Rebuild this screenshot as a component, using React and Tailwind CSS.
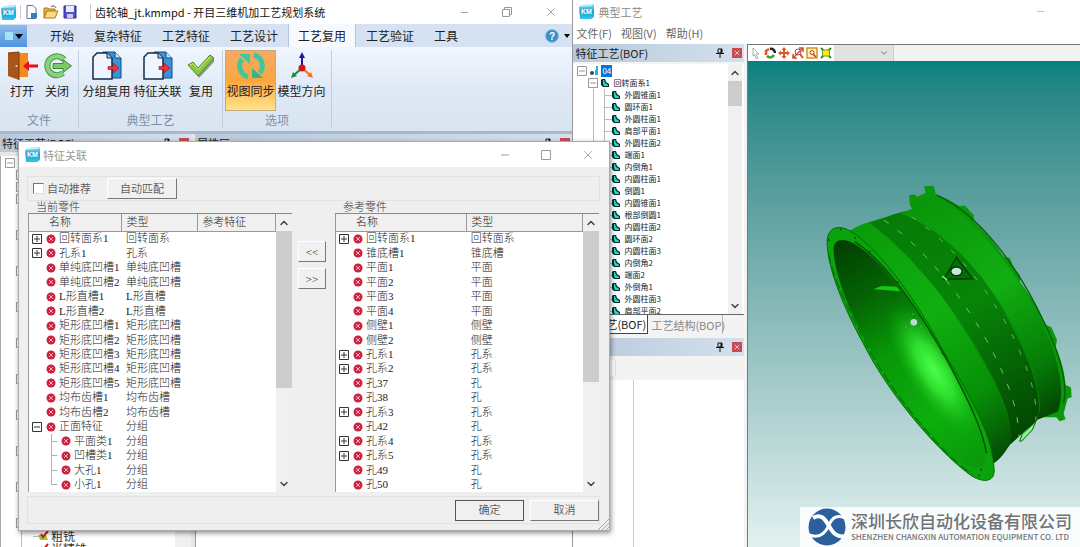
import { Minus, X, ChevronUp, ChevronDown } from 'lucide-react';

const currentParts = [
  { name: '回转面系1', type: '回转面系', toggle: 'plus' },
  { name: '孔系1', type: '孔系', toggle: 'plus' },
  { name: '单纯底凹槽1', type: '单纯底凹槽' },
  { name: '单纯底凹槽2', type: '单纯底凹槽' },
  { name: 'L形直槽1', type: 'L形直槽' },
  { name: 'L形直槽2', type: 'L形直槽' },
  { name: '矩形底凹槽1', type: '矩形底凹槽' },
  { name: '矩形底凹槽2', type: '矩形底凹槽' },
  { name: '矩形底凹槽3', type: '矩形底凹槽' },
  { name: '矩形底凹槽4', type: '矩形底凹槽' },
  { name: '矩形底凹槽5', type: '矩形底凹槽' },
  { name: '均布齿槽1', type: '均布齿槽' },
  { name: '均布齿槽2', type: '均布齿槽' },
  { name: '正面特征', type: '分组', toggle: 'minus' },
  { name: '平面类1', type: '分组', child: true },
  { name: '凹槽类1', type: '分组', child: true },
  { name: '大孔1', type: '分组', child: true },
  { name: '小孔1', type: '分组', child: true, last: true }
];

const referenceParts = [
  { name: '回转面系1', type: '回转面系', toggle: 'plus' },
  { name: '锥底槽1', type: '锥底槽' },
  { name: '平面1', type: '平面' },
  { name: '平面2', type: '平面' },
  { name: '平面3', type: '平面' },
  { name: '平面4', type: '平面' },
  { name: '侧壁1', type: '侧壁' },
  { name: '侧壁2', type: '侧壁' },
  { name: '孔系1', type: '孔系', toggle: 'plus' },
  { name: '孔系2', type: '孔系', toggle: 'plus' },
  { name: '孔37', type: '孔' },
  { name: '孔38', type: '孔' },
  { name: '孔系3', type: '孔系', toggle: 'plus' },
  { name: '孔42', type: '孔' },
  { name: '孔系4', type: '孔系', toggle: 'plus' },
  { name: '孔系5', type: '孔系', toggle: 'plus' },
  { name: '孔49', type: '孔' },
  { name: '孔50', type: '孔' }
];

const bofItems = [
  '外圆锥面1', '圆环面1', '外圆柱面1', '肩部平面1', '外圆柱面2', '端面1', '内倒角1',
  '内圆柱面1', '倒圆1', '内圆锥面1', '根部倒圆1', '内圆柱面2', '圆环面2', '内圆柱面3',
  '内倒角2', '端面2', '外倒角1', '外圆柱面3', '肩部平面2'
];

const tabs = ['开始', '复杂特征', '工艺特征', '工艺设计', '工艺复用', '工艺验证', '工具'];

const ribbonGroups = [
  {
    title: '文件',
    width: 'w-[79px] px-1',
    buttons: [
      { label: '打开', icon: DoorIcon, width: 'w-9' },
      { label: '关闭', icon: CloseFileIcon, width: 'w-[34px]' }
    ]
  },
  {
    title: '典型工艺',
    width: 'w-[144px] px-[2px]',
    buttons: [
      { label: '分组复用', icon: CopyPagesIcon, width: 'w-[51px]' },
      { label: '特征关联', icon: CopyPagesIcon, width: 'w-[51px]' },
      { label: '复用', icon: TickIcon, width: 'w-9' }
    ]
  },
  {
    title: '选项',
    width: 'w-[109px] px-[2px]',
    buttons: [
      { label: '视图同步', icon: SyncIcon, width: 'w-[51px]', active: true },
      { label: '模型方向', icon: AxesIcon, width: 'w-[51px]' }
    ]
  }
];

function KmLogo() {
  return (
    <svg viewBox="0 0 15 15" className="w-[15px] h-[15px] shrink-0">
      <defs>
        <linearGradient id="km" x1="0" y1="0" x2="0" y2="1">
          <stop offset="0" stopColor="#8fdcf2" />
          <stop offset=".5" stopColor="#1da0d0" />
          <stop offset="1" stopColor="#37c3ea" />
        </linearGradient>
      </defs>
      <path d="M0 3 3 1 15 0v13l-3 2H1z" fill="url(#km)" />
      <path d="M0 3 3 1 15 0l-2 2z" fill="#c3eef8" />
      <text x="7.5" y="9.5" textAnchor="middle" fontSize="7" fontWeight="700" fill="#fff" fontFamily="Liberation Sans">KM</text>
    </svg>
  );
}

function DoorIcon() {
  return (
    <svg viewBox="0 0 32 30" className="w-8 h-[30px]">
      <path d="M10 2h12v24H10z" fill="#f58a1c" />
      <path d="M2 2 13 1v28L2 25z" fill="#a9561a" />
      <path d="M2 2 13 1v28" fill="none" stroke="#7a3a0c" />
      <circle cx="10.500" cy="15" r="1" fill="#ffd58a" />
      <path d="m17 15 6-5v3.500h9v3h-9V20z" fill="#e6101c" />
    </svg>
  );
}

function CloseFileIcon() {
  return (
    <svg viewBox="0 0 30 30" className="w-[30px] h-[30px]">
      <path d="M22 8.500A9.500 9.500 0 1 0 21 22" fill="none" stroke="#3c9a3c" strokeWidth="6" />
      <path d="M22 8.500A9.500 9.500 0 1 0 21 22" fill="none" stroke="#8fd07e" strokeWidth="4" />
      <path d="M11 12.500h10V8.500l8.500 6.500-8.500 6.500v-4H11z" fill="#7cc96a" stroke="#2f8f36" />
    </svg>
  );
}

function CopyPagesIcon() {
  return (
    <svg viewBox="0 0 30 30" className="w-[30px] h-[30px]">
      <path d="M11 1h12l6 6v20H11z" fill="#3b93d6" stroke="#0d4f86" />
      <path d="M23 1v6h6" fill="#bfe2fa" stroke="#0d4f86" />
      <path d="M5 2h10l5 5v21H1V6z" fill="#eef5ff" stroke="#132c44" strokeWidth="1.500" />
      <path d="M15 2v5h5" fill="#9ccaf0" stroke="#132c44" />
      <path d="M16 15.500h5V12l6 5-6 5v-3.500h-5z" fill="#f0323c" stroke="#8d1820" strokeWidth=".6" />
    </svg>
  );
}

function TickIcon() {
  return (
    <svg viewBox="0 0 30 30" className="w-[30px] h-[30px]">
      <path d="m12 25 16-18v4L13 27z" fill="#8b9399" />
      <path d="m2 14 5-3 5 6L24 4l4 3-16 18z" fill="#8cc63f" stroke="#4f8a22" />
      <path d="m4 14 3-1.500 5 6L24 6" fill="none" stroke="#c9ec8c" />
    </svg>
  );
}

function SyncIcon() {
  return (
    <svg viewBox="0 0 30 30" className="w-[30px] h-[30px]">
      <g fill="none" stroke="#3fc79a" strokeWidth="5">
        <path d="M12 26A11.500 11.500 0 0 1 6 8" />
        <path d="M18 4a11.500 11.500 0 0 1 6 18" />
      </g>
      <path d="M3 3h11v10z" fill="#3fc79a" />
      <path d="M27 27H16V17z" fill="#2fb68c" />
    </svg>
  );
}

function AxesIcon() {
  return (
    <svg viewBox="0 0 30 30" className="w-[30px] h-[30px]">
      <path d="M15 17V4" stroke="#1b1ba0" strokeWidth="2" />
      <path d="m15 1-3 6h6z" fill="#1b1ba0" />
      <path d="m15 17-8 7" stroke="#1d8a3b" strokeWidth="2" />
      <path d="m4 27 2-6 4 4z" fill="#1d8a3b" />
      <path d="m15 17 8 7" stroke="#f07020" strokeWidth="2" />
      <path d="m26 27-6-2 4-4z" fill="#f07020" />
      <circle cx="15" cy="17" r="3.500" fill="#e01010" />
    </svg>
  );
}

function ErrorDot() {
  return (
    <svg viewBox="0 0 10 10" className="w-[10px] h-[10px] shrink-0">
      <circle cx="5" cy="5" r="4.500" fill="#d0203f" />
      <path d="m3 3 4 4M7 3 3 7" stroke="#f3b6c0" strokeWidth="1" />
    </svg>
  );
}

function Toggle({ kind, tone = 'stroke-[#333]' }) {
  return (
    <svg viewBox="0 0 10 10" className={`w-[10px] h-[10px] shrink-0 fill-white ${tone}`}>
      <path d="M.5.5h9v9h-9z" />
      <path d={kind === 'plus' ? 'M2 5h6M5 2v6' : 'M2 5h6'} />
    </svg>
  );
}

function FeatureIcon() {
  return (
    <svg viewBox="0 0 8 8" className="w-2 h-2 shrink-0">
      <path d="M1 0h3l1 3 3 2v3H2L0 6V1z" fill="#052f2f" />
      <path d="M2 1h1l1 3 3 2v1H3L2 5z" fill="#22dcc4" />
    </svg>
  );
}

function PinIcon() {
  return (
    <svg viewBox="0 0 8 10" className="w-2 h-[10px]">
      <path d="M2 1h4v4H2zM0 5.500h8M4 6v4" fill="none" stroke="#111" />
      <path d="M4.500 1H6v4H4.500z" fill="#111" />
    </svg>
  );
}

function PanelHeader({ title }) {
  return (
    <div className="h-[18px] flex items-center gap-2 px-[2px] bg-gradient-to-r from-[#b9c8da] to-[#d3e0ee]">
      <h2 className="text-[11px] leading-4 text-[#1c1c1c] flex-1 whitespace-nowrap">{title}</h2>
      <button aria-label="固定"><PinIcon /></button>
      <button aria-label="关闭面板" className="w-[10px] h-[10px] bg-[#c74b50] text-white flex items-center justify-center">
        <X className="w-2 h-2" />
      </button>
    </div>
  );
}

function Scrollbar({ thumb, width = 'w-4' }) {
  return (
    <div className={`${width} shrink-0 bg-[#f0f0f0] flex flex-col items-center`}>
      <div className="h-[17px] flex items-center"><ChevronUp className="w-3 h-3 text-[#444]" strokeWidth={3} /></div>
      <div className={`w-full bg-[#cdcdcd] ${thumb}`} />
      <div className="flex-1" />
      <div className="h-[17px] flex items-center"><ChevronDown className="w-3 h-3 text-[#444]" strokeWidth={3} /></div>
    </div>
  );
}

function PartsTable({ title, rows, columns, thumb }) {
  return (
    <section className="w-[264px]">
      <h3 className="h-3 pl-2 text-[11px] leading-3 text-[#333]">{title}</h3>
      <div className="h-[279px] flex bg-white border-t border-l border-t-[#888] border-l-[#999]">
        <table className="flex-1 h-[278px] table-fixed border-collapse text-[11px] leading-[11px] text-[#222]">
          <thead>
            <tr className="h-[17px] bg-[#f0f0f0]">
              {columns.map((column, index) => (
                <th
                  key={column.label}
                  className={`${column.width} p-0 text-left font-light border-r border-b border-[#9a9a9a] ${index === 0 ? 'pl-5' : 'pl-1'}`}
                >
                  {column.label}
                </th>
              ))}
            </tr>
          </thead>
          <tbody>
            {rows.map((row) => (
              <tr key={row.name}>
                <td className="p-0 pl-[3px] whitespace-nowrap">
                  <div className="h-[11px] flex items-center">
                    {row.child ? (
                      <svg viewBox="0 0 29 11" className="w-[29px] h-[11px] shrink-0 overflow-visible">
                        <path d={row.last ? 'M19.500-2v7.500h6' : 'M19.500-2v15M19.500 5.500h6'} fill="none" stroke="#a5b8b0" />
                      </svg>
                    ) : (
                      <span className="w-[14px] flex shrink-0">{row.toggle && <Toggle kind={row.toggle} />}</span>
                    )}
                    <ErrorDot />
                    <span className="pl-[3px]">{row.name}</span>
                  </div>
                </td>
                <td className="p-0 pl-1 whitespace-nowrap">{row.type}</td>
                {columns.length > 2 && <td />}
              </tr>
            ))}
          </tbody>
        </table>
        <Scrollbar thumb={thumb} />
      </div>
    </section>
  );
}

function MainWindow() {
  return (
    <div className="w-[53%] flex flex-col bg-white">
      <header className="h-6 flex items-center pl-px pr-[14px]">
        <KmLogo />
        <div className="ml-1 pl-1 flex gap-1 items-center border-l border-[#ccc]">
          <button aria-label="新建">
            <svg viewBox="0 0 14 14" className="w-[14px] h-[14px]">
              <path d="M2 .5h6l3 3v10H2z" fill="#fff" stroke="#5577a0" />
              <path d="M6 8h6v5H6z" fill="#2f80b8" />
            </svg>
          </button>
          <button aria-label="打开文件">
            <svg viewBox="0 0 16 14" className="w-4 h-[14px]">
              <path d="M1 13V3h4l1 1h6v3" fill="#e9b13c" stroke="#a87818" />
              <path d="m1 13 3-7h11l-3 7z" fill="#fbd980" stroke="#a87818" />
              <path d="M8 2c2-2 4-1 5 1" fill="none" stroke="#444" />
            </svg>
          </button>
          <button aria-label="保存">
            <svg viewBox="0 0 14 14" className="w-[14px] h-[14px]">
              <path d="M1 1h12v12H1z" fill="#5353c4" stroke="#2c2c8c" />
              <path d="M3 1h8v6H3z" fill="#e8eaff" />
              <path d="M4 9h6v4H4z" fill="#c5c8f0" />
            </svg>
          </button>
        </div>
        <h1 className="ml-[13px] pl-1 text-[11px] leading-4 text-[#111] border-l border-[#ccc] flex-1 whitespace-nowrap">
          齿轮轴_jt.kmmpd - 开目三维机加工艺规划系统
        </h1>
        <div className="flex items-center gap-8 text-[#999]">
          <button aria-label="最小化"><Minus className="w-[11px] h-[11px]" strokeWidth={2} /></button>
          <button aria-label="还原">
            <svg viewBox="0 0 10 10" className="w-[10px] h-[10px] fill-none stroke-current">
              <path d="M.5 2.500h7v7h-7zM2.500 2.500v-2h7v7h-2" />
            </svg>
          </button>
          <button aria-label="关闭"><X className="w-[14px] h-[14px]" strokeWidth={1.500} /></button>
        </div>
      </header>

      <nav className="h-[23px] flex items-end bg-[#d6e2f1]">
        <button aria-label="应用菜单" className="w-[27px] h-[22px] flex items-center justify-center gap-[2px] bg-gradient-to-b from-[#8fbcec] to-[#4f93de]">
          <span className="w-2 h-2 bg-[#a4e2f4]" />
          <svg viewBox="0 0 8 5" className="w-2 h-[5px]"><path d="M0 0h8L4 5z" /></svg>
        </button>
        <div className="ml-[13px] flex flex-1">
          {tabs.map((tab) => (
            <button
              key={tab}
              className={`h-[23px] px-[9px] text-xs leading-4 text-[#222] border-x whitespace-nowrap ${
                tab === '工艺复用' ? 'bg-[#f6faff] border-[#b3c6de]' : 'border-transparent'
              }`}
            >
              {tab}
            </button>
          ))}
        </div>
        <button aria-label="帮助" className="h-[22px] pr-[2px] flex items-center gap-[5px]">
          <svg viewBox="0 0 14 14" className="w-[14px] h-[14px]">
            <circle cx="7" cy="7" r="6.500" fill="#3f8fc4" stroke="#8fbfe0" />
            <text x="7" y="10.500" textAnchor="middle" fontSize="10" fontWeight="700" fill="#fff" fontFamily="Liberation Sans">?</text>
          </svg>
          <svg viewBox="0 0 6 4" className="w-[6px] h-1"><path d="M0 0h6L3 4z" /></svg>
        </button>
      </nav>

      <div className="h-[84px] pt-[3px] flex bg-gradient-to-b from-[#f0f6fe] via-[#dfe9f6] to-[#d9e4f2]">
        {ribbonGroups.map((group) => (
          <section key={group.title} className={`h-[78px] flex flex-col border-r border-[#c0cedf] ${group.width}`}>
            <div className="flex">
              {group.buttons.map(({ label, icon: Icon, width, active }) => (
                <button
                  key={label}
                  className={`h-[61px] pt-px flex flex-col items-center text-xs leading-4 text-[#222] whitespace-nowrap ${width} ${
                    active ? 'bg-gradient-to-b from-[#f4a968] via-[#fba63c] to-[#ffe68c] outline outline-1 -outline-offset-1 outline-[#c8a878]' : ''
                  }`}
                >
                  <Icon />
                  <span className="mt-[2px]">{label}</span>
                </button>
              ))}
            </div>
            <h2 className="text-xs leading-[18px] text-center text-[#8090a8]">{group.title}</h2>
          </section>
        ))}
      </div>

      <div className="h-[3px] bg-[#a9b8c8]" />
      <div className="flex-1 flex bg-[#e6e6e6] gap-1">
        <section className="w-[191px] flex flex-col">
          <PanelHeader title="特征工艺(BOF)" />
          <div className="flex-1 flex mt-1 bg-white border-l border-[#aaa]">
            <ul className="flex-1 h-[391px] pt-px overflow-hidden">
              {Array.from({ length: 31 }, (_, i) => (
                <li key={i} className={`h-3 flex items-center ${i === 0 ? 'pl-1' : 'pl-[15px]'}`}>
                  {(i < 3 || i % 3 === 0) && <Toggle kind="minus" tone="stroke-[#999]" />}
                </li>
              ))}
              {['粗铣', '半精铣'].map((step) => (
                <li key={step} className="h-[13px] pl-5 flex items-center text-xs leading-[13px] text-[#333]">
                  <span className="w-3 h-[13px] border-l border-[#bbb] shrink-0" />
                  <svg viewBox="0 0 16 12" className="w-4 h-3 mr-[2px] shrink-0">
                    <path d="M0 6.500h7" stroke="#bbb" />
                    <path d="M5 5h8l2 5H7z" fill="#9bcf2f" />
                    <path d="m8 4 2 3 5-6" fill="none" stroke="#d02020" strokeWidth="2" />
                  </svg>
                  {step}
                </li>
              ))}
            </ul>
            <div className="w-4 bg-[#f0f0f0]" />
          </div>
        </section>
        <section className="flex-1 flex flex-col">
          <PanelHeader title="属性区" />
          <div className="flex-1 mt-1 bg-white border-l border-[#999]" />
        </section>
      </div>
    </div>
  );
}

function ViewerToolbar() {
  return (
    <div className="h-[17px] flex bg-[#f3f3f3] border-t border-[#777]">
      <div className="flex items-center gap-[2px] px-[2px] bg-white">
        <button aria-label="选择">
          <svg viewBox="0 0 12 12" className="w-3 h-3"><path d="m3 1 6 6H6l2 4-2 .500-1.500-4L3 9z" fill="#fff" stroke="#999" strokeWidth=".8" /></svg>
        </button>
        <button aria-label="旋转">
          <svg viewBox="0 0 12 12" className="w-3 h-3" fill="none" strokeWidth="2.500">
            <path d="M2 8V4l3-2" stroke="#e0552a" /><path d="M6 2c3-1 5 2 5 4" stroke="#222" /><path d="M3 9c2 2 5 2 7-1" stroke="#35a035" />
          </svg>
        </button>
        <button aria-label="平移">
          <svg viewBox="0 0 12 12" className="w-3 h-3"><path d="m6 0 2.500 3H7v2h2V3.500L12 6 9 8.500V7H7v2h1.500L6 12 3.500 9H5V7H3v1.500L0 6l3-2.500V5h2V3H3.500z" fill="#e0552a" /></svg>
        </button>
        <button aria-label="缩放">
          <svg viewBox="0 0 12 12" className="w-3 h-3" fill="none" stroke="#d8492a">
            <path d="m1 11 10-10M7 1h4v4M1 7v4h4" strokeWidth="1.500" /><circle cx="6" cy="5" r="3" stroke="#9a5040" /><path d="m8 7 3 4" strokeWidth="2" />
          </svg>
        </button>
        <button aria-label="窗口缩放">
          <svg viewBox="0 0 12 12" className="w-3 h-3" fill="none">
            <path d="M1 1h10v10H1z" fill="#fff3c2" stroke="#d2922a" strokeWidth="1.500" /><circle cx="6" cy="5.500" r="2" stroke="#c03a20" /><path d="m7 7 3 3" stroke="#c03a20" strokeWidth="1.500" />
          </svg>
        </button>
        <button aria-label="适应窗口">
          <svg viewBox="0 0 12 12" className="w-3 h-3">
            <path d="m1 1 3 3m4 4 3 3M11 1 8 4M4 8l-3 3" stroke="#2d8a2d" strokeWidth="2" /><path d="M2.500 3h7v6h-7z" fill="#f7ec10" stroke="#7c9a18" />
          </svg>
        </button>
      </div>
      <button aria-label="视图列表" className="w-[60px] h-4 flex items-center justify-end pr-1 bg-[#e2e2e2] border-r border-[#ccc]">
        <ChevronDown className="w-[10px] h-[10px] text-[#555]" />
      </button>
    </div>
  );
}

// ring part shown in the 3D view, front flange lower left, rear flange upper right
function RingModel() {
  return (
    <svg viewBox="748 61 332 486" className="w-full flex-1">
      <defs>
        <linearGradient id="front" x1="230" y1="180" x2="680" y2="860" gradientUnits="userSpaceOnUse">
          <stop offset="0" stopColor="#0a9c0a" />
          <stop offset=".4" stopColor="#10b010" />
          <stop offset=".75" stopColor="#079007" />
          <stop offset="1" stopColor="#044a04" />
        </linearGradient>
        <linearGradient id="groove" x1="340" y1="140" x2="740" y2="800" gradientUnits="userSpaceOnUse">
          <stop offset="0" stopColor="#067c06" />
          <stop offset=".45" stopColor="#078507" />
          <stop offset="1" stopColor="#034403" />
        </linearGradient>
        <linearGradient id="rear" x1="430" y1="90" x2="830" y2="730" gradientUnits="userSpaceOnUse">
          <stop offset="0" stopColor="#0a960a" />
          <stop offset=".45" stopColor="#11ae11" />
          <stop offset=".8" stopColor="#067c06" />
          <stop offset="1" stopColor="#034403" />
        </linearGradient>
        <linearGradient id="bore" x1="190" y1="220" x2="590" y2="900" gradientUnits="userSpaceOnUse">
          <stop offset="0" stopColor="#024002" />
          <stop offset=".22" stopColor="#046404" />
          <stop offset=".45" stopColor="#089808" />
          <stop offset=".75" stopColor="#0cae0c" />
          <stop offset="1" stopColor="#0a980a" />
        </linearGradient>
        <radialGradient id="shine" cx="0" cy="0" r="1" gradientUnits="userSpaceOnUse" gradientTransform="translate(462 600) rotate(58) scale(230 85)">
          <stop offset="0" stopColor="#4dff4d" />
          <stop offset=".4" stopColor="#38ee38" stopOpacity=".8" />
          <stop offset="1" stopColor="#10b010" stopOpacity="0" />
        </radialGradient>
        <clipPath id="boreClip">
          <path d="M161 245C158 205 190 202 225 222C320 280 420 430 500 575C565 690 612 790 617 860C615 912 570 898 520 858C420 770 310 620 240 480C190 380 165 300 161 245Z" />
        </clipPath>
      </defs>
      <g transform="translate(780 170) scale(.33333)">
        <path d="M390 105 388 75 405 72 412 80 438 68 432 48 462 47 468 72C500 82 525 100 540 108L555 106 582 135 583 155C620 190 650 225 672 260L690 264 702 292 722 318 720 335C755 380 780 425 800 465L815 472 832 510 828 530C845 570 855 610 858 645L874 652 876 682 864 686 852 732 858 748 840 754 830 742 790 742Z" fill="#0a980a" />
        <path d="M470 75C600 130 720 300 790 450C840 550 865 640 852 700" fill="none" stroke="#075f07" strokeWidth="4" />
        <path d="M205 185C260 150 320 145 385 122C430 108 440 98 475 88C650 180 850 560 835 725L772 750 692 824 642 880C600 760 300 260 205 185Z" fill="#078507" />
        <path d="M205 185C240 165 260 158 285 155C370 220 500 380 590 540C660 660 700 750 692 822C675 850 660 870 642 880C600 760 300 260 205 185Z" fill="url(#front)" />
        <path d="M270 160C310 145 340 130 385 122C500 180 610 310 690 460C750 570 795 680 772 752L690 824C705 740 650 640 590 530C500 380 370 230 270 160Z" fill="url(#groove)" />
        <path d="M362 130C410 112 430 98 475 88C580 140 680 270 750 390C820 510 865 640 835 725L772 750C800 690 755 570 690 450C620 320 500 180 362 130Z" fill="url(#rear)" />
        <path d="M312 150C430 230 540 370 620 510C680 620 715 710 718 800" fill="none" stroke="#63c963" strokeWidth="3" strokeDasharray="18 34" />
        <path d="M395 140C510 215 620 350 690 480C745 590 775 680 768 750" fill="none" stroke="#55be55" strokeWidth="3" strokeDasharray="16 36" />
        <path d="M530 262 578 326 492 328Z" fill="#056e05" stroke="#034203" strokeWidth="5" />
        <path d="m488 318 14 12" stroke="#75ee75" strokeWidth="5" />
        <ellipse cx="530" cy="304" rx="17" ry="13" fill="#c9e6e2" stroke="#023802" strokeWidth="4" />
        <path d="m720 814 8-22 40-36-10 24-32 34z" fill="#8ff08f" stroke="#066006" strokeWidth="3" />
        <path d="M142 225C138 175 170 160 210 182C290 230 400 370 500 560C590 710 636 800 643 895C648 935 615 942 575 918C480 850 330 680 250 520C190 410 146 300 142 225Z" fill="#0ba30b" stroke="#046a04" strokeWidth="3" />
        <path d="M146 250C155 310 200 410 255 515C335 670 480 845 575 912" fill="none" stroke="#067606" strokeWidth="4" strokeDasharray="30 10" />
        <g clipPath="url(#boreClip)">
          <path d="M100 150h560v800H100z" fill="url(#bore)" />
          <path d="M100 150h560v800H100z" fill="url(#shine)" />
          <path d="m280 358 25-10 45 2 12 14z" fill="#16c816" />
        </g>
        <circle cx="402" cy="457" r="10" fill="#bfd9d6" />
        <g fill="#7fae8a"><circle cx="400" cy="432" r="2" /><circle cx="378" cy="471" r="2" /><circle cx="424" cy="470" r="2" /></g>
        <path d="M225 215C320 275 430 440 505 575C565 690 610 780 620 850" fill="none" stroke="#034d03" strokeWidth="4" />
        <path d="M180 178h4m40 26h4m40 40h4m80 92h4m130 214h4m-345-340h4m454 690h4m-12 18h4" stroke="#034d03" strokeWidth="6" />
      </g>
    </svg>
  );
}

function CompanyBadge() {
  return (
    <div className="absolute right-0 bottom-0 w-[280px] h-10 pl-2 flex items-center gap-[5px] bg-white/85">
      <svg viewBox="0 0 38 38" className="w-[38px] h-[38px] shrink-0">
        <circle cx="19" cy="19" r="18.500" fill="#2c5f9e" />
        <path d="M5 10c8-5 12 1 16 8 4 7 8 12 17 10" fill="none" stroke="#fff" strokeWidth="4" />
        <path d="M1 27c11 4 17-3 20-10C24 10 29 6 37 10" fill="none" stroke="#fff" strokeWidth="3" />
      </svg>
      <div className="text-[#6f7378] whitespace-nowrap">
        <p className="text-[17px] leading-5 font-medium">深圳长欣自动化设备有限公司</p>
        <p className="text-[8px] leading-3 font-medium">SHENZHEN CHANGXIN AUTOMATION EQUIPMENT CO. LTD</p>
      </div>
    </div>
  );
}

function TypicalWindow() {
  return (
    <div className="flex-1 flex flex-col bg-[#f3f3f3] border-l border-[#999]">
      <header className="h-[23px] pl-[6px] pr-[34px] flex items-center gap-1 bg-white">
        <KmLogo />
        <h1 className="flex-1 text-[11px] leading-4 text-[#888]">典型工艺</h1>
        <button aria-label="最小化"><Minus className="w-[11px] h-[11px] text-[#bbb]" /></button>
      </header>
      <nav className="h-[21px] pl-[3px] flex gap-[9px] bg-white text-[11px] leading-[21px] text-[#666]">
        <button>文件(F)</button>
        <button>视图(V)</button>
        <button>帮助(H)</button>
      </nav>

      <div className="flex-1 flex">
        <aside className="w-[171px] flex flex-col">
          <PanelHeader title="特征工艺(BOF)" />
          <div className="mt-[2px] h-[251px] flex bg-white border-b border-[#666]">
            <div className="flex-1 pt-px pl-1 overflow-hidden text-[8px] leading-3 text-[#222] whitespace-nowrap">
              <div className="h-3 flex items-center gap-[2px]">
                <Toggle kind="minus" tone="stroke-[#999]" />
                <svg viewBox="0 0 10 10" className="w-[10px] h-[10px]">
                  <circle cx="3" cy="7" r="2" fill="#15567c" />
                  <path d="M6 4h3v5H6z" fill="#20b4d8" /><path d="M8 0v5" stroke="#20b4d8" strokeWidth="2" />
                </svg>
                <span className="px-px bg-[#0078d7] text-white">04</span>
              </div>
              <div className="h-3 pl-[11px] flex items-center gap-[3px]">
                <Toggle kind="minus" tone="stroke-[#999]" />
                <FeatureIcon />
                <span className="pl-px">回转面系1</span>
              </div>
              <ul className="ml-4 pl-[10px] border-l border-[#bbb]">
                {bofItems.map((item) => (
                  <li key={item} className="h-3 flex items-center border-l border-[#bbb]">
                    <span className="w-[7px] h-px bg-[#bbb]" />
                    <FeatureIcon />
                    <span className="pl-1">{item}</span>
                  </li>
                ))}
              </ul>
            </div>
            <Scrollbar thumb="h-[25px]" width="w-[14px]" />
            <div className="w-[2px]" />
          </div>
          <div className="h-[19px] flex text-[11px] leading-[18px] whitespace-nowrap">
            <button className="w-[75px] text-right pr-1 bg-white border-r border-b border-[#444] text-[#222]">特征工艺(BOF)</button>
            <button className="w-[75px] pl-[3px] text-left border-r border-[#bbb] text-[#888]">工艺结构(BOP)</button>
          </div>
          <div className="h-1" />
          <PanelHeader title="" />
          <div className="h-6 pt-1">
            <div className="w-[43px] h-4 bg-white border-r border-[#ddd]" />
          </div>
          <div className="flex-1 flex bg-white">
            <div className="w-[61px] border-r border-[#ccc]" />
          </div>
        </aside>

        <div className="w-1 border-r border-[#777]" />

        <main className="flex-1 flex flex-col">
          <ViewerToolbar />
          <div className="relative flex-1 flex flex-col bg-gradient-to-b from-[#078080] to-[#e2f1f0]">
            <RingModel />
            <CompanyBadge />
          </div>
        </main>
      </div>
    </div>
  );
}

const raised = 'bg-[#f0f0f0] border border-t-white border-l-white border-r-[#777] border-b-[#777] text-[11px] leading-4 text-[#222]';

function RelationDialog() {
  return (
    <div
      role="dialog"
      aria-label="特征关联"
      className="absolute left-[18px] top-[141px] w-[592px] bg-[#efefef] border border-[#aaa] shadow-[1px_2px_5px_rgba(0,0,0,0.45)]"
    >
      <header className="h-[25px] pl-[6px] pr-[14px] flex items-center gap-[3px] bg-white text-[#999]">
        <KmLogo />
        <h2 className="flex-1 text-[11px] leading-4">特征关联</h2>
        <div className="flex items-center gap-[30px]">
          <button aria-label="最小化"><Minus className="w-3 h-3" /></button>
          <button aria-label="最大化">
            <svg viewBox="0 0 10 10" className="w-[10px] h-[10px] fill-none stroke-current"><path d="M.5.5h9v9h-9z" /></svg>
          </button>
          <button aria-label="关闭"><X className="w-[14px] h-[14px]" strokeWidth={1.500} /></button>
        </div>
      </header>

      <div className="pt-[9px] pl-2 pr-[9px] font-['Liberation_Serif','Noto_Sans_CJK_SC',serif] font-light">
        <div className="h-[25px] pl-[5px] flex items-center border border-[#e2e2e2]">
          <input
            id="auto-recommend"
            type="checkbox"
            className="appearance-none w-[11px] h-[11px] bg-white border border-t-[#777] border-l-[#777] border-[#ddd]"
          />
          <label htmlFor="auto-recommend" className="pl-[3px] text-[11px] leading-4 text-[#222]">自动推荐</label>
          <button className={`ml-4 w-[70px] h-[21px] ${raised}`}>自动匹配</button>
        </div>

        <div className="px-px flex">
          <PartsTable
            title="当前零件"
            rows={currentParts}
            thumb="h-[157px]"
            columns={[
              { label: '名称', width: 'w-[93px]' },
              { label: '类型', width: 'w-[76px]' },
              { label: '参考特征', width: 'w-[78px]' }
            ]}
          />
          <div className="flex-1 pt-10 pl-[6px] flex flex-col gap-[6px]">
            <button className={`w-7 h-[21px] ${raised}`}>&lt;&lt;</button>
            <button className={`w-7 h-[21px] ${raised}`}>&gt;&gt;</button>
          </div>
          <PartsTable
            title="参考零件"
            rows={referenceParts}
            thumb="h-[151px]"
            columns={[
              { label: '名称', width: 'w-[131px]' },
              { label: '类型', width: 'w-[116px]' }
            ]}
          />
        </div>

        <div className="mt-1 h-[28px] flex items-center justify-end gap-[6px] border border-[#e2e2e2]">
          <button className={`w-[69px] h-[21px] outline outline-1 -outline-offset-1 outline-[#555] ${raised}`}>确定</button>
          <button className={`w-[69px] h-[21px] ${raised}`}>取消</button>
        </div>
      </div>
      <div className="h-[6px] flex justify-end items-end">
        <svg viewBox="0 0 12 12" className="w-3 h-3 shrink-0">
          <path d="M1 12 12 1M5 12l7-7M9 12l3-3" stroke="#aaa" />
        </svg>
      </div>
    </div>
  );
}

export default function App() {
  return (
    <div className="relative min-h-screen flex overflow-hidden font-['Noto_Sans_CJK_SC',sans-serif]">
      <MainWindow />
      <TypicalWindow />
      <RelationDialog />
    </div>
  );
}
